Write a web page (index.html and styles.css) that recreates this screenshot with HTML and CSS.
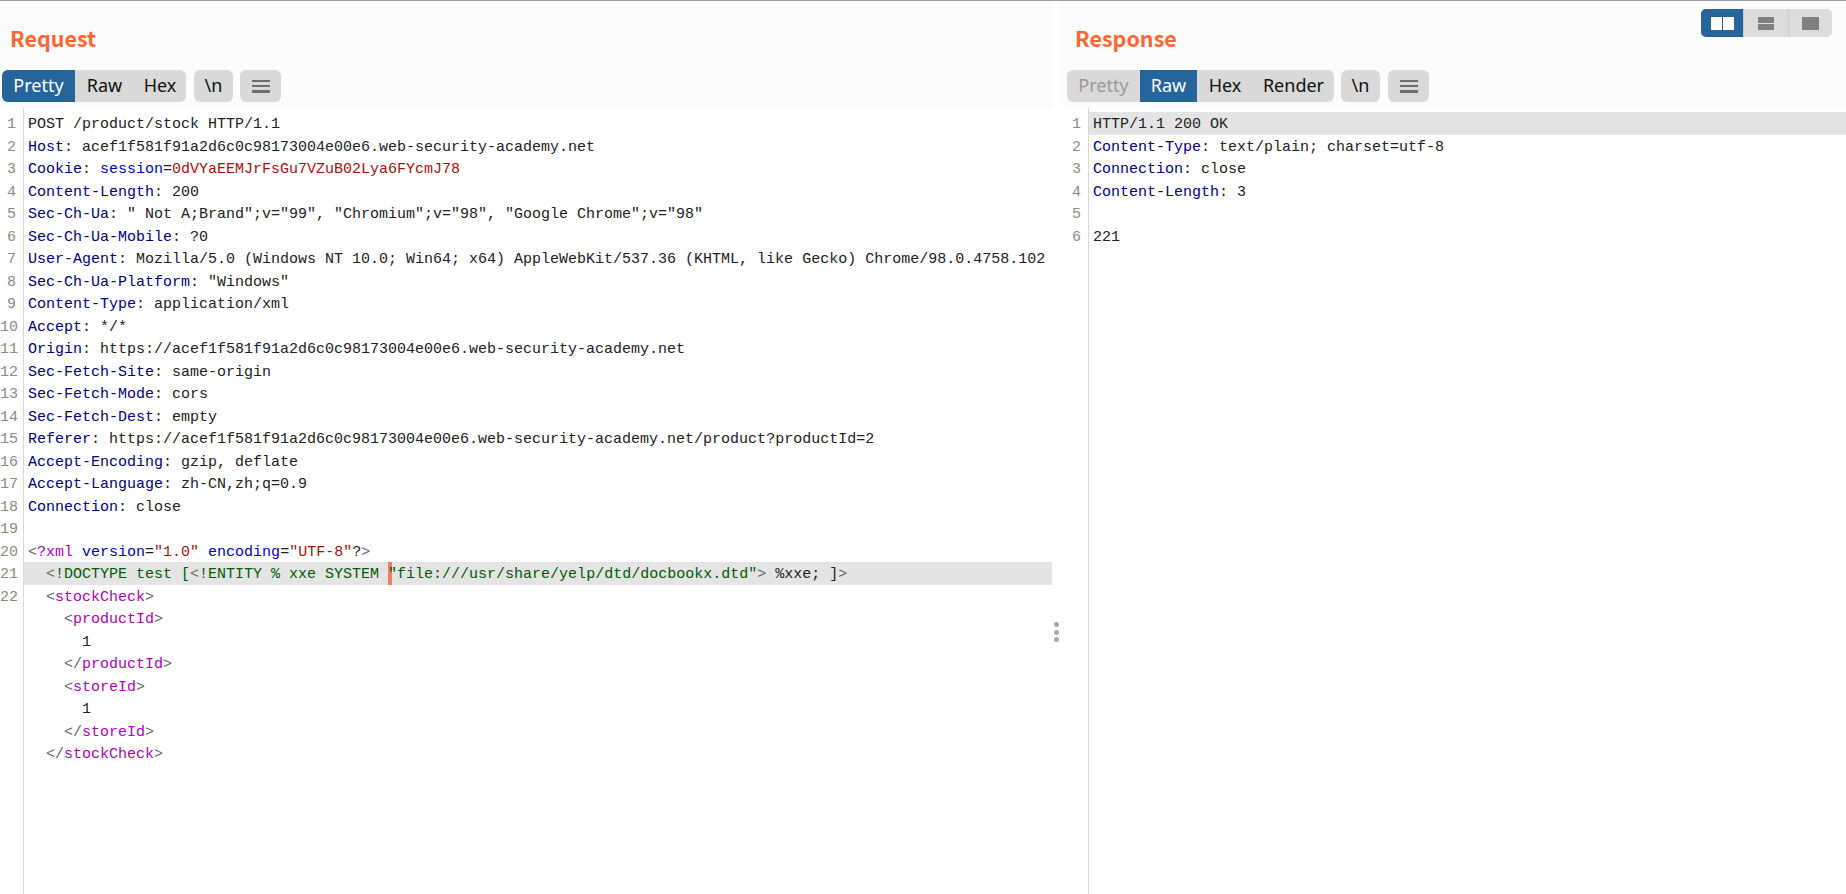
FILE: index.html
```html
<!DOCTYPE html>
<html lang="en">
<head>
  <meta charset="UTF-8" />
  <title>Request / Response</title>
  <link rel="stylesheet" href="styles.css">
</head>
<body>
  <div class="layout-toggle">
    <span class="seg active">
      <svg width="23" height="13" viewBox="0 0 23 13"><rect x="0" y="0" width="11" height="13" fill="#fff"/><rect x="12" y="0" width="11" height="13" fill="#fff"/></svg>
    </span>
    <span class="seg">
      <svg width="16" height="13" viewBox="0 0 16 13"><rect x="0" y="0" width="16" height="6" fill="#808080"/><rect x="0" y="7" width="16" height="6" fill="#808080"/></svg>
    </span>
    <span class="seg">
      <svg width="17" height="13" viewBox="0 0 17 13"><rect x="0" y="0" width="17" height="13" fill="#808080"/></svg>
    </span>
  </div>

  <div class="split">
    <section class="pane pane-left">
      <header class="pane-head">
        <h2>Request</h2>
        <div class="toolbar">
          <div class="tabs">
            <span class="tab tab-pretty active">Pretty</span>
            <span class="tab tab-raw">Raw</span>
            <span class="tab tab-hex">Hex</span>
          </div>
          <span class="btn btn-nl">\n</span>
          <span class="btn btn-menu"><i></i><i></i><i></i></span>
        </div>
      </header>
      <div class="editor">
        <div class="gutter">
          <div>1</div><div>2</div><div>3</div><div>4</div><div>5</div><div>6</div><div>7</div><div>8</div><div>9</div><div>10</div><div>11</div><div>12</div><div>13</div><div>14</div><div>15</div><div>16</div><div>17</div><div>18</div><div>19</div><div>20</div><div>21</div><div>22</div>
        </div>
        <div class="code">
          <div class="line">POST /product/stock HTTP/1.1</div>
          <div class="line"><span class="k">Host</span>: acef1f581f91a2d6c0c98173004e00e6.web-security-academy.net</div>
          <div class="line"><span class="k">Cookie</span>: <span class="a">session</span>=<span class="s">0dVYaEEMJrFsGu7VZuB02Lya6FYcmJ78</span></div>
          <div class="line"><span class="k">Content-Length</span>: 200</div>
          <div class="line"><span class="k">Sec-Ch-Ua</span>: " Not A;Brand";v="99", "Chromium";v="98", "Google Chrome";v="98"</div>
          <div class="line"><span class="k">Sec-Ch-Ua-Mobile</span>: ?0</div>
          <div class="line"><span class="k">User-Agent</span>: Mozilla/5.0 (Windows NT 10.0; Win64; x64) AppleWebKit/537.36 (KHTML, like Gecko) Chrome/98.0.4758.102</div>
          <div class="line"><span class="k">Sec-Ch-Ua-Platform</span>: "Windows"</div>
          <div class="line"><span class="k">Content-Type</span>: application/xml</div>
          <div class="line"><span class="k">Accept</span>: */*</div>
          <div class="line"><span class="k">Origin</span>: https://acef1f581f91a2d6c0c98173004e00e6.web-security-academy.net</div>
          <div class="line"><span class="k">Sec-Fetch-Site</span>: same-origin</div>
          <div class="line"><span class="k">Sec-Fetch-Mode</span>: cors</div>
          <div class="line"><span class="k">Sec-Fetch-Dest</span>: empty</div>
          <div class="line"><span class="k">Referer</span>: https://acef1f581f91a2d6c0c98173004e00e6.web-security-academy.net/product?productId=2</div>
          <div class="line"><span class="k">Accept-Encoding</span>: gzip, deflate</div>
          <div class="line"><span class="k">Accept-Language</span>: zh-CN,zh;q=0.9</div>
          <div class="line"><span class="k">Connection</span>: close</div>
          <div class="line"></div>
          <div class="line"><span class="p">&lt;</span><span class="m">?xml</span> <span class="a">version</span>=<span class="s">"1.0"</span> <span class="a">encoding</span>=<span class="s">"UTF-8"</span>?<span class="p">&gt;</span></div>
          <div class="line current"><span class="i1"><span class="p">&lt;</span><span class="g">!DOCTYPE test [</span><span class="p">&lt;</span><span class="g">!ENTITY % xxe SYSTEM </span><span class="caret"></span><span class="g">"file:///usr/share/yelp/dtd/docbookx.dtd"</span><span class="p">&gt;</span> %xxe; ]<span class="p">&gt;</span></span></div>
          <div class="line"><span class="i1"><span class="p">&lt;</span><span class="m">stockCheck</span><span class="p">&gt;</span></span></div>
          <div class="line"><span class="i2"><span class="p">&lt;</span><span class="m">productId</span><span class="p">&gt;</span></span></div>
          <div class="line"><span class="i3">1</span></div>
          <div class="line"><span class="i2"><span class="p">&lt;/</span><span class="m">productId</span><span class="p">&gt;</span></span></div>
          <div class="line"><span class="i2"><span class="p">&lt;</span><span class="m">storeId</span><span class="p">&gt;</span></span></div>
          <div class="line"><span class="i3">1</span></div>
          <div class="line"><span class="i2"><span class="p">&lt;/</span><span class="m">storeId</span><span class="p">&gt;</span></span></div>
          <div class="line"><span class="i1"><span class="p">&lt;/</span><span class="m">stockCheck</span><span class="p">&gt;</span></span></div>
        </div>
      </div>
    </section>

    <div class="divider"><div class="dots"><b></b><b></b><b></b></div></div>

    <section class="pane pane-right">
      <header class="pane-head">
        <h2>Response</h2>
        <div class="toolbar">
          <div class="tabs">
            <span class="tab tab-pretty off">Pretty</span>
            <span class="tab tab-raw2 active">Raw</span>
            <span class="tab tab-hex2">Hex</span>
            <span class="tab tab-render">Render</span>
          </div>
          <span class="btn btn-nl">\n</span>
          <span class="btn btn-menu"><i></i><i></i><i></i></span>
        </div>
      </header>
      <div class="editor">
        <div class="gutter">
          <div>1</div><div>2</div><div>3</div><div>4</div><div>5</div><div>6</div>
        </div>
        <div class="code">
          <div class="line current">HTTP/1.1 200 OK</div>
          <div class="line"><span class="k">Content-Type</span>: text/plain; charset=utf-8</div>
          <div class="line"><span class="k">Connection</span>: close</div>
          <div class="line"><span class="k">Content-Length</span>: 3</div>
          <div class="line"></div>
          <div class="line">221</div>
        </div>
      </div>
    </section>
  </div>
</body>
</html>
```

FILE: styles.css
```css
* {
  box-sizing: border-box;
}

html, body {
  height: 100%;
}

body {
  margin: 0;
  background: #fff;
  border-top: 1px solid #9a98ac;
  overflow: hidden;
  position: relative;
  font-family: "Noto Sans", "Liberation Sans", sans-serif;
}

/* Umschalter oben rechts */
.layout-toggle {
  position: absolute;
  top: 8px;
  right: 14px;
  display: flex;
  width: 131px;
  height: 28px;
  border-radius: 5px;
  overflow: hidden;
  background: #dcdcdc;
}

.seg {
  flex: 1;
  display: flex;
  align-items: center;
  justify-content: center;
  border-left: 1px solid #cfcfcf;
}

.seg.active {
  flex: none;
  width: 42px;
  border-left: 0;
  background: #26649c;
}

.seg svg {
  display: block;
}

.split {
  display: flex;
  height: 100%;
}

.pane {
  display: flex;
  flex-direction: column;
  min-width: 0;
}

.pane-left {
  width: 1052px;
}

.pane-right {
  flex: 1;
}

.divider {
  width: 7px;
  position: relative;
}

.dots {
  position: absolute;
  top: 621px;
  left: 2px;
  display: flex;
  flex-direction: column;
  gap: 2.5px;
}

.dots b {
  width: 5px;
  height: 5px;
  border-radius: 50%;
  background: #a8a8a8;
}

.pane-head {
  height: 107px;
  background: #fcfcfc;
  flex: none;
}

.pane-head h2 {
  margin: 0;
  padding: 23px 0 0 10px;
  height: 69px;
  font-family: "Noto Sans CJK SC", "Noto Sans", sans-serif;
  font-size: 21.5px;
  line-height: 28px;
  font-weight: 700;
  color: #ff6633;
}

.pane-right .pane-head h2 {
  padding-left: 16px;
}

.toolbar {
  display: flex;
  gap: 8px;
  padding-left: 2px;
  height: 32px;
}

.pane-right .toolbar {
  padding-left: 8px;
}

.tabs {
  display: flex;
  background: #d9d9d9;
  border-radius: 6px;
  overflow: hidden;
}

.tab, .btn {
  display: flex;
  align-items: center;
  justify-content: center;
  height: 32px;
  padding-bottom: 2px;
  font-size: 18px;
  color: #111;
}

.tab-pretty { width: 73px; }
.tab-raw { width: 59px; }
.tab-hex { width: 52px; }
.tab-raw2 { width: 57px; }
.tab-hex2 { width: 56px; }
.tab-render { width: 81px; }

.tab.active {
  background: #26649c;
  color: #fff;
}

.tab.off {
  color: #999;
}

.btn {
  background: #d9d9d9;
  border-radius: 6px;
}

.btn-nl {
  width: 39px;
}

.pane-left .btn-menu {
  margin-left: -1px;
}

.pane-right .btn-nl {
  margin-left: -1px;
}

.btn-menu {
  width: 41px;
  flex-direction: column;
  gap: 3px;
  padding-bottom: 0;
}

.btn-menu i {
  display: block;
  width: 18px;
  height: 2px;
  background: #6e6e6e;
}

.btn-menu i:last-child {
  height: 3px;
}

.editor {
  flex: 1;
  display: flex;
  font-family: "Liberation Mono", "DejaVu Sans Mono", monospace;
  font-size: 15px;
  line-height: 26px;
  color: #222;
}

.gutter {
  flex: none;
  width: 24px;
  padding: 4px 7px 0 0;
  border-right: 1px solid #d8d8d8;
  text-align: right;
  color: #8c8c84;
}

.gutter div {
  height: 22.5px;
}

.pane-right .gutter {
  width: 30px;
}

.code {
  flex: 1;
  min-width: 0;
  padding-top: 4px;
  overflow: hidden;
}

.line {
  height: 22.5px;
  padding-left: 4px;
  white-space: pre;
}

.line.current {
  background: #e4e4e4;
}

.k { color: #000080; }
.a { color: #0000c8; }
.s { color: #a81010; }
.m { color: #b000b8; }
.g { color: #005c00; }
.p { color: #666; }

.i1 { padding-left: 18px; }
.i2 { padding-left: 36px; }
.i3 { padding-left: 54px; }

.caret {
  display: inline-block;
  width: 4px;
  height: 23px;
  margin-right: -4px;
  vertical-align: top;
  background: #f08060;
}
```
